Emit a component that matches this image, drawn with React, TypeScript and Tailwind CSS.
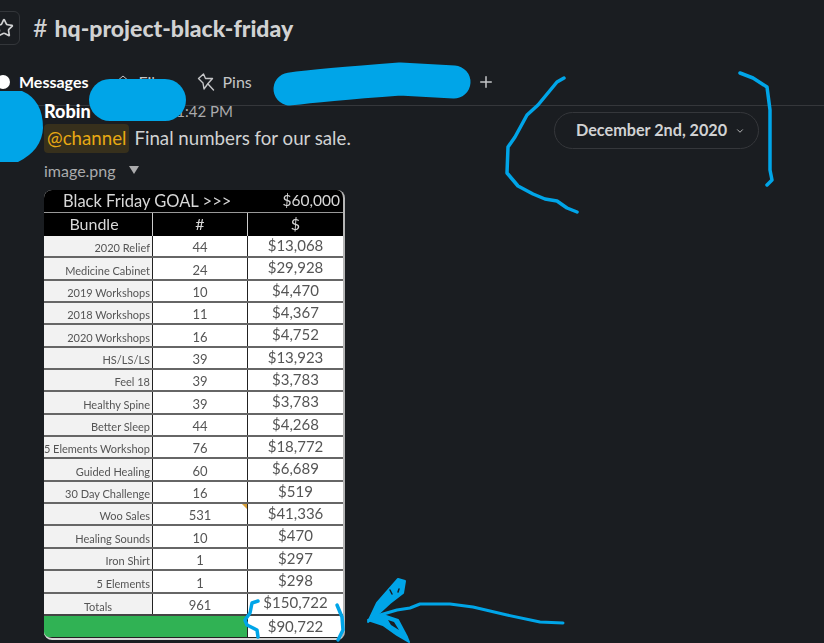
import React from 'react';
import { Star, Plus, ChevronDown } from 'lucide-react';

const rows = [
	['2020 Relief', '44', '$13,068'],
	['Medicine Cabinet', '24', '$29,928'],
	['2019 Workshops', '10', '$4,470'],
	['2018 Workshops', '11', '$4,367'],
	['2020 Workshops', '16', '$4,752'],
	['HS/LS/LS', '39', '$13,923'],
	['Feel 18', '39', '$3,783'],
	['Healthy Spine', '39', '$3,783'],
	['Better Sleep', '44', '$4,268'],
	['5 Elements Workshop', '76', '$18,772'],
	['Guided Healing', '60', '$6,689'],
	['30 Day Challenge', '16', '$519'],
	['Woo Sales', '531', '$41,336'],
	['Healing Sounds', '10', '$470'],
	['Iron Shirt', '1', '$297'],
	['5 Elements', '1', '$298'],
];

const SalesTable = () => (
	<div className="w-[301px] overflow-hidden rounded-lg border-r-2 border-b-2 border-r-[#b5b5b5] border-b-[#d8d8d8] bg-white font-['Lato',sans-serif] blur-[0.35px]">
		<div className="flex h-[22px] items-center justify-between bg-black pr-[3px] pl-[19px] text-[16.5px] text-[#d8d8d8]">
			<span>Black Friday GOAL &gt;&gt;&gt;</span>
			<span className="text-[15.5px]">$60,000</span>
		</div>
		<div className="flex h-[24px] border-t border-[#999] bg-black text-[16px] leading-[22px] text-[#d8d8d8]">
			<div className="w-[109px] border-r border-[#ccc] text-center">
				<span className="mr-[8px]">Bundle</span>
			</div>
			<div className="w-[95px] border-r border-[#ccc] text-center">#</div>
			<div className="flex-1 text-center">$</div>
		</div>
		{rows.map((r) => (
			<div key={r[0]} className="flex h-[22.35px] border-b-2 border-[#666] text-[#555]">
				<div className="flex w-[109px] items-end justify-end border-r border-[#222] bg-[#f2f2f2] pr-[2px] text-[11px] leading-[17px] whitespace-nowrap">
					{r[0]}
				</div>
				<div className="relative flex w-[95px] items-end justify-center border-r border-[#222] text-[13px] leading-[18px]">
					{r[1]}
					{r[0] === 'Woo Sales' && (
						<span className="absolute top-0 right-0 h-0 w-0 border-t-[5px] border-l-[5px] border-t-[#d9a13a] border-l-transparent" />
					)}
				</div>
				<div className="flex flex-1 items-center justify-center pb-[2px] text-[15px]">{r[2]}</div>
			</div>
		))}
		<div className="flex h-[22.35px] border-b-2 border-[#444] text-[#555]">
			<div className="flex w-[109px] items-end justify-center border-r border-[#222] bg-[#f2f2f2] text-[11px] leading-[15px]">
				Totals
			</div>
			<div className="flex w-[95px] items-end justify-center border-r border-[#222] text-[13px] leading-[17px]">
				961
			</div>
			<div className="flex flex-1 items-center justify-center pb-[2px] text-[15px]">$150,722</div>
		</div>
		<div className="flex h-[22px] border-b border-[#222] text-[#555]">
			<div className="w-[204px] border-r border-[#222] bg-[#30b254]" />
			<div className="flex flex-1 items-center justify-center text-[15px]">$90,722</div>
		</div>
	</div>
);

// the marker scribbles drawn over the screenshot
const Scribbles = () => (
	<svg className="absolute top-0 left-0" width="824" height="643" fill="none" stroke="#00a5e8" strokeLinecap="round" strokeLinejoin="round">
		<path d="M290 89C320 85 360 82 400 79L454 82" strokeWidth="33" />
		<path d="M110 100H165" strokeWidth="42" />
		<path d="M-10 91H22Q43 100 43 128Q42 150 18 162H-10Z" fill="#00a5e8" stroke="none" />
		<path d="M564 78 557 82 538 105 527 115 515 137 508 147 507 173 518 186 533 194 545 199 557 201 567 208 577 212" strokeWidth="3.5" />
		<path d="M740 73 753 78 767 87 770 110 770 170 772 180 767 185" strokeWidth="3.5" />
		<path d="M563 623 540 622 507 615 473 607 450 604 420 604 410 608 397 610 373 617" strokeWidth="3" />
		<path d="M368 622 377 603 398 579 405 581 403 593 390 603 377 615Z" fill="#00a5e8" strokeWidth="2" />
		<path d="M368 620 383 615 398 620 407 637 409 642 397 635 383 625Z" fill="#00a5e8" strokeWidth="2" />
		<path d="M390 590 392 594M399 589 398 592" stroke="#1a1d21" strokeWidth="1.5" />
		<path d="M388 620 394 622 399 630 391 625Z" fill="#1a1d21" stroke="none" />
		<path d="M258 601 252 603 250 613 245 620 247 625 257 630 258 637" strokeWidth="3.5" />
		<path d="M337 605 342 617 343 630 338 640" strokeWidth="3.5" />
	</svg>
);

const App = () => {
	return (
		<div className="relative h-[643px] w-[824px] overflow-hidden bg-[#1a1d21] font-['Lato',sans-serif]">
			{/* Channel header */}
			<div className="flex h-[56px] items-center">
				<button className="ml-[-12px] flex h-[34px] w-[32px] items-center justify-center rounded-md border border-[#33363a] text-[#d1d2d3]">
					<Star size={20} />
				</button>
				<h1 className="ml-[13px] flex items-baseline text-[23px] font-black whitespace-nowrap text-[#d1d2d3]">
					<span className="mr-[7px] text-[25px] font-normal">#</span>hq-project-black-friday
				</h1>
			</div>

			{/* Tabs */}
			<div className="flex h-[50px] items-center border-b border-[#35373b] pt-[2px] text-[16px] text-[#c4c5c7]">
				<span className="ml-[-4px] h-[14px] w-[14px] rounded-full bg-white" />
				<span className="ml-[9px] font-bold text-white">Messages</span>
				<svg className="ml-[27px]" width="16" height="16" viewBox="0 0 16 16" fill="none" stroke="currentColor">
					<path d="M1 8 8 2l7 6v6H1Z" />
				</svg>
				<span className="ml-[7px] w-[32px]">Files</span>
				<svg className="ml-[27px]" width="18" height="18" viewBox="0 0 18 18" fill="none" stroke="currentColor" strokeWidth="1.4" strokeLinejoin="round" strokeLinecap="round">
					<path d="M1.5 5.5 6.5 1 8.5 5.5H15.5L11 10.5 7 16 6 10Z" />
					<path d="M11 11 16.5 17" />
				</svg>
				<span className="ml-[7px] w-[29px]">Pins</span>
				<Plus className="ml-[226px]" size={18} />
			</div>

			{/* Message */}
			<div className="pl-[44px]">
				<div className="mt-[-4px] flex h-[19px] items-center text-[18px] leading-[19px]">
					<span className="font-black text-white">Robin</span>
					<span className="ml-[77px] text-[15px] text-[#ababad]">11:42 PM</span>
				</div>
				<div className="mt-[4px] flex h-[27px] items-center text-[18.7px]">
					<span className="rounded-sm bg-[#37301c] px-[3px] text-[#e8a913]">@channel</span>
					<span className="ml-[5px] text-[#d1d2d3]">Final numbers for our sale.</span>
				</div>
				<div className="mt-[9px] flex h-[20px] items-center text-[16px] text-[#ababad]">
					<span>image.png</span>
					<span className="mb-[2px] ml-[13px] h-0 w-0 border-x-[5.5px] border-t-[8px] border-x-transparent border-t-[#ababad]" />
				</div>
				<div className="mt-[9px]">
					<SalesTable />
				</div>
			</div>

			{/* Date divider pill */}
			<div className="absolute top-[112px] left-[554px] flex h-[37px] w-[205px] items-center gap-[8px] rounded-full border border-[#35373b] bg-[#1a1d21] pl-[21px] text-[16.2px] font-bold text-[#d1d2d3]">
				<span>December 2nd, 2020</span>
				<ChevronDown size={10} />
			</div>

			<Scribbles />
		</div>
	);
};

export default App;
